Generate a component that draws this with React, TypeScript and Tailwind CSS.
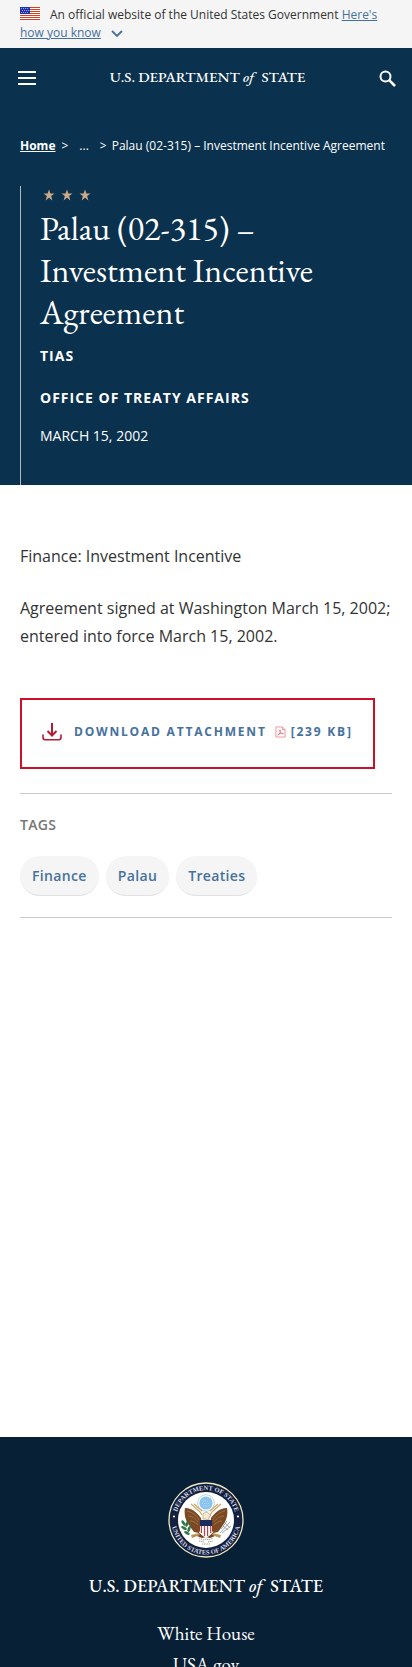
import React from "react";

const SERIF = "font-['EB_Garamond','Liberation_Serif',serif]";

function Flag() {
  return (
    <svg viewBox="0 0 20 13" className="mr-[10px] inline-block h-[13px] w-5 align-[-1px]" aria-hidden="true">
      <rect width="20" height="13" fill="#fff" />
      {[0, 2, 4, 6, 8, 10, 12].map((y) => (
        <rect key={y} y={y} width="20" height="1" fill="#db3e1f" />
      ))}
      <rect width="10" height="7" fill="#1e33b1" />
      {[1, 3, 5].map((y) =>
        [1, 3, 5, 7].map((x) => <rect key={`${x}-${y}`} x={x + (y === 3 ? 1 : 0)} y={y} width="0.9" height="0.9" fill="#b7c0ee" />)
      )}
    </svg>
  );
}

function Star() {
  return (
    <svg viewBox="0 0 24 24" className="size-3" aria-hidden="true">
      <path fill="#cba987" d="M12 1l2.8 8H23l-6.700 5.200L18.800 23 12 17.700 5.200 23l2.500-8.800L1 9h8.200z" />
    </svg>
  );
}

function DownloadIcon() {
  return (
    <svg viewBox="0 0 20 18" className="h-[18px] w-5" fill="none" stroke="#b01c33" strokeWidth="2" aria-hidden="true">
      <path d="M10 0v12M5.500 8l4.500 4.500L14.500 8" />
      <path strokeWidth="1.600" strokeLinecap="round" d="M1 12v2.500c0 1.400.9 2.200 2.300 2.200h13.400c1.400 0 2.300-.8 2.300-2.200V12" />
    </svg>
  );
}

function PdfIcon() {
  return (
    <svg viewBox="0 0 12 13" className="mr-[5px] ml-2 h-3 w-[11px]" fill="none" stroke="#e5747b" aria-hidden="true">
      <path strokeWidth="0.800" d="M1 1h7l3 3v8H1zM8 1v3h3" />
      <path strokeWidth="0.900" d="M3 10c2-1 3.200-3.500 3-5.200-.1-1-1.200-.8-1 .2.300 1.700 1.700 3.500 3.500 3.800 1 .1.800-1-.2-1C6.500 7.800 4.500 8.500 3 10z" />
    </svg>
  );
}

function Seal() {
  return (
    <svg viewBox="0 0 76 76" className="size-[76px]" role="img" aria-label="Department of State seal">
      <defs>
        <path id="sealTop" d="M8 38a30 30 0 0 1 60 0" />
        <path id="sealBottom" d="M3.500 38a34.500 34.500 0 0 0 69 0" />
      </defs>
      <circle cx="38" cy="38" r="37" fill="#13203f" stroke="#eee9bd" strokeWidth="1.300" />
      <circle cx="38" cy="38" r="28" fill="#fff" />
      <g fill="#d8dce6" fontSize="6.500" fontWeight="700" fontFamily="Liberation Serif, serif" textAnchor="middle">
        <text><textPath href="#sealTop" startOffset="50%">DEPARTMENT OF STATE</textPath></text>
        <text><textPath href="#sealBottom" startOffset="50%">UNITED STATES OF AMERICA</textPath></text>
      </g>
      <circle cx="6" cy="34.500" r="1.100" fill="#fff" />
      <circle cx="70" cy="34.500" r="1.100" fill="#fff" />
      <circle cx="38" cy="21" r="8.300" fill="#fff" stroke="#a9c9dd" strokeWidth="0.800" />
      <circle cx="38" cy="21" r="6.600" fill="#89c4ee" />
      <path d="M35 19h6M34 21.500h8M35.500 24h5" stroke="#c5e3f8" strokeWidth="0.700" strokeDasharray="1 1" />
      <path d="M23 22l9 8 2 3M53 22l-9 8-2 3M26 22l8 7M50 22l-8 7" fill="none" stroke="#cfa768" strokeWidth="1.200" />
      <path fill="#7b4a25" d="M17 26c5-.5 11 3 16 10l1 8-3 7-5-1-3-4-4-6c-2-4-3-9-2-14zM59 26c-5-.5-11 3-16 10l-1 8 3 7 5-1 3-4 4-6c2-4 3-9 2-14z" />
      <path fill="none" stroke="#a77846" strokeWidth="0.800" d="M19 29c5 1 9 4 12 9M20 34c4 0 7 2 10 6M22 39c3 0 5 1 8 4M57 29c-5 1-9 4-12 9M56 34c-4 0-7 2-10 6M54 39c-3 0-5 1-8 4" />
      <path fill="#f4ecd0" stroke="#ac925c" strokeWidth="0.600" d="M35 37v-4c0-3 5-4 6-1l2 2-2 .5v3z" />
      <path fill="#733e23" d="M31 51l7 3 7-3 2 3-5 2-4-1-4 1-5-2z" />
      <path fill="#fff" d="M32 38h12v11c0 4-4 6-6 6s-6-2-6-6z" />
      <path stroke="#b8414c" strokeWidth="1.200" d="M33.400 43v8M36.500 43v11M39.600 43v11M42.700 43v8" />
      <path fill="#1c2d5d" d="M32 38h12v6H32z" />
      <path fill="#b49757" d="M23 53l8-2 1 2-8 3zM53 53l-8-2-1 2 8 3z" />
      <g fill="#2f7745">
        <ellipse cx="15.500" cy="41" rx="3" ry="1.400" transform="rotate(55 15.500 41)" />
        <ellipse cx="19" cy="42" rx="3" ry="1.400" transform="rotate(110 19 42)" />
        <ellipse cx="16" cy="46" rx="3.200" ry="1.400" transform="rotate(30 16 46)" />
        <ellipse cx="21" cy="47" rx="3.200" ry="1.400" transform="rotate(110 21 47)" />
        <ellipse cx="19" cy="51" rx="3" ry="1.400" transform="rotate(25 19 51)" />
      </g>
      <path fill="none" stroke="#9ba0a4" strokeWidth="0.900" d="M52 51l10-11M54 51l9-7M53 47l6-8M57 41l5 5M55 44l5 4" />
      <path fill="none" stroke="#aaa286" strokeWidth="1" strokeDasharray="1.500 .7" d="M31 56l4 2 3-1 3 1 4-2M31 59l5 1M40 60l5-1M34 62h8" />
    </svg>
  );
}

function Wordmark({ className }: { className: string }) {
  return (
    <span className={`${SERIF} block font-medium whitespace-nowrap text-white ${className}`}>
      U.S. DEPARTMENT <em className="mr-1">of</em> STATE
    </span>
  );
}

const tags = ["Finance", "Palau", "Treaties"];
const footerLinks = ["White House", "USA.gov"];

export default function App() {
  return (
    <div className="flex h-screen flex-col overflow-hidden bg-white font-['Open_Sans',sans-serif] text-[#333]">
      <section aria-label="Official government website" className="shrink-0 bg-[#f5f5f5] py-[6px] pr-4 pl-5 text-[12px] leading-[18px]">
        <Flag />
        An official website of the United States Government{" "}
        <a href="#how-you-know" className="text-[#46719c] underline">Here's how you know</a>
        <svg viewBox="0 0 12 8" className="ml-[10px] inline-block h-2 w-3" fill="none" stroke="#46719c" strokeWidth="1.800" aria-hidden="true">
          <path d="M1 1l5 5 5-5" />
        </svg>
      </section>

      <div className="shrink-0 bg-[#0a314d] text-white">
        <header className="flex h-[60px] items-center justify-between pr-4 pl-[18px]">
          <button type="button" aria-label="Menu" className="flex w-[18px] flex-col gap-1">
            <span className="h-[2px] bg-white" />
            <span className="h-[2px] bg-white" />
            <span className="h-[2px] bg-white" />
          </button>
          <a href="#home"><Wordmark className="pb-[2px] text-[15px] leading-5" /></a>
          <button type="button" aria-label="Search">
            <svg viewBox="0 0 17 17" className="size-[17px]" fill="none" stroke="#fff" aria-hidden="true">
              <circle cx="6.500" cy="6.500" r="5" strokeWidth="2" />
              <path strokeWidth="2.600" d="M10.200 10.200l5.800 5.800" />
            </svg>
          </button>
        </header>

        <nav aria-label="Breadcrumb" className="px-5 pt-[29px] text-[12px] leading-[18px]">
          <ol className="flex whitespace-nowrap">
            <li><a href="#home" className="font-bold underline">Home</a></li>
            <li className="ml-[6px]">&gt;</li>
            <li className="ml-[11px]">...</li>
            <li className="ml-[11px]">&gt;</li>
            <li className="ml-[5px]">Palau (02-315) – Investment Incentive Agreement</li>
          </ol>
        </nav>

        <div className="mt-[31px] ml-5 border-l border-[#b0b7b5] pb-[39px] pl-[19px]">
          <div className="flex gap-[6px] pt-[3px] pl-[3px]">
            <Star />
            <Star />
            <Star />
          </div>
          <h1 className={`${SERIF} mt-[6px] max-w-[310px] text-[34px] leading-[42px]`}>
            Palau (02-315) – Investment Incentive Agreement
          </h1>
          <p className="mt-3 text-[14px] leading-[21px] font-bold tracking-[1px]">TIAS</p>
          <p className="mt-[21px] text-[14px] leading-[21px] font-bold tracking-[1px]">OFFICE OF TREATY AFFAIRS</p>
          <p className="mt-[17px] text-[14px] leading-[21px]">MARCH 15, 2002</p>
        </div>
      </div>

      <main className="shrink-0 px-5 pt-[57px] pb-[519px]">
        <p className="text-[16px] leading-7">Finance: Investment Incentive</p>
        <p className="mt-6 text-[16px] leading-7">
          Agreement signed at Washington March 15, 2002; entered into force March 15, 2002.
        </p>
        <a href="#attachment" className="mt-[48px] flex h-[71px] w-fit items-center border-2 border-[#cb1029] px-5 pb-1 text-[12px] font-bold whitespace-nowrap text-[#46719c]">
          <DownloadIcon />
          <span className="ml-3 tracking-[0.15em]">DOWNLOAD ATTACHMENT</span>
          <PdfIcon />
          <span className="tracking-[0.15em]">[239 KB]</span>
        </a>
        <section className="mt-6 border-y border-[#c8c9ca] pt-5 pb-[21px]">
          <h2 className="text-[14px] leading-[22px] font-semibold tracking-wide text-[#777]">TAGS</h2>
          <ul className="mt-5 flex gap-[7px]">
            {tags.map((tag) => (
              <li key={tag}>
                <a href="#tag" className="block rounded-full border-b border-[#e2e2e2] bg-[#f5f5f5] px-3 text-[14px] leading-[39px] font-semibold tracking-wide text-[#46719c]">
                  {tag}
                </a>
              </li>
            ))}
          </ul>
        </section>
      </main>

      <footer className="flex shrink-0 flex-col items-center bg-[#082036] pt-[45px] text-white">
        <Seal />
        <Wordmark className="mt-[14px] text-[18px] leading-7" />
        <ul className={`${SERIF} mt-[18px] text-center text-[19px] leading-[31px]`}>
          {footerLinks.map((link) => (
            <li key={link}><a href="#site">{link}</a></li>
          ))}
        </ul>
      </footer>
    </div>
  );
}
